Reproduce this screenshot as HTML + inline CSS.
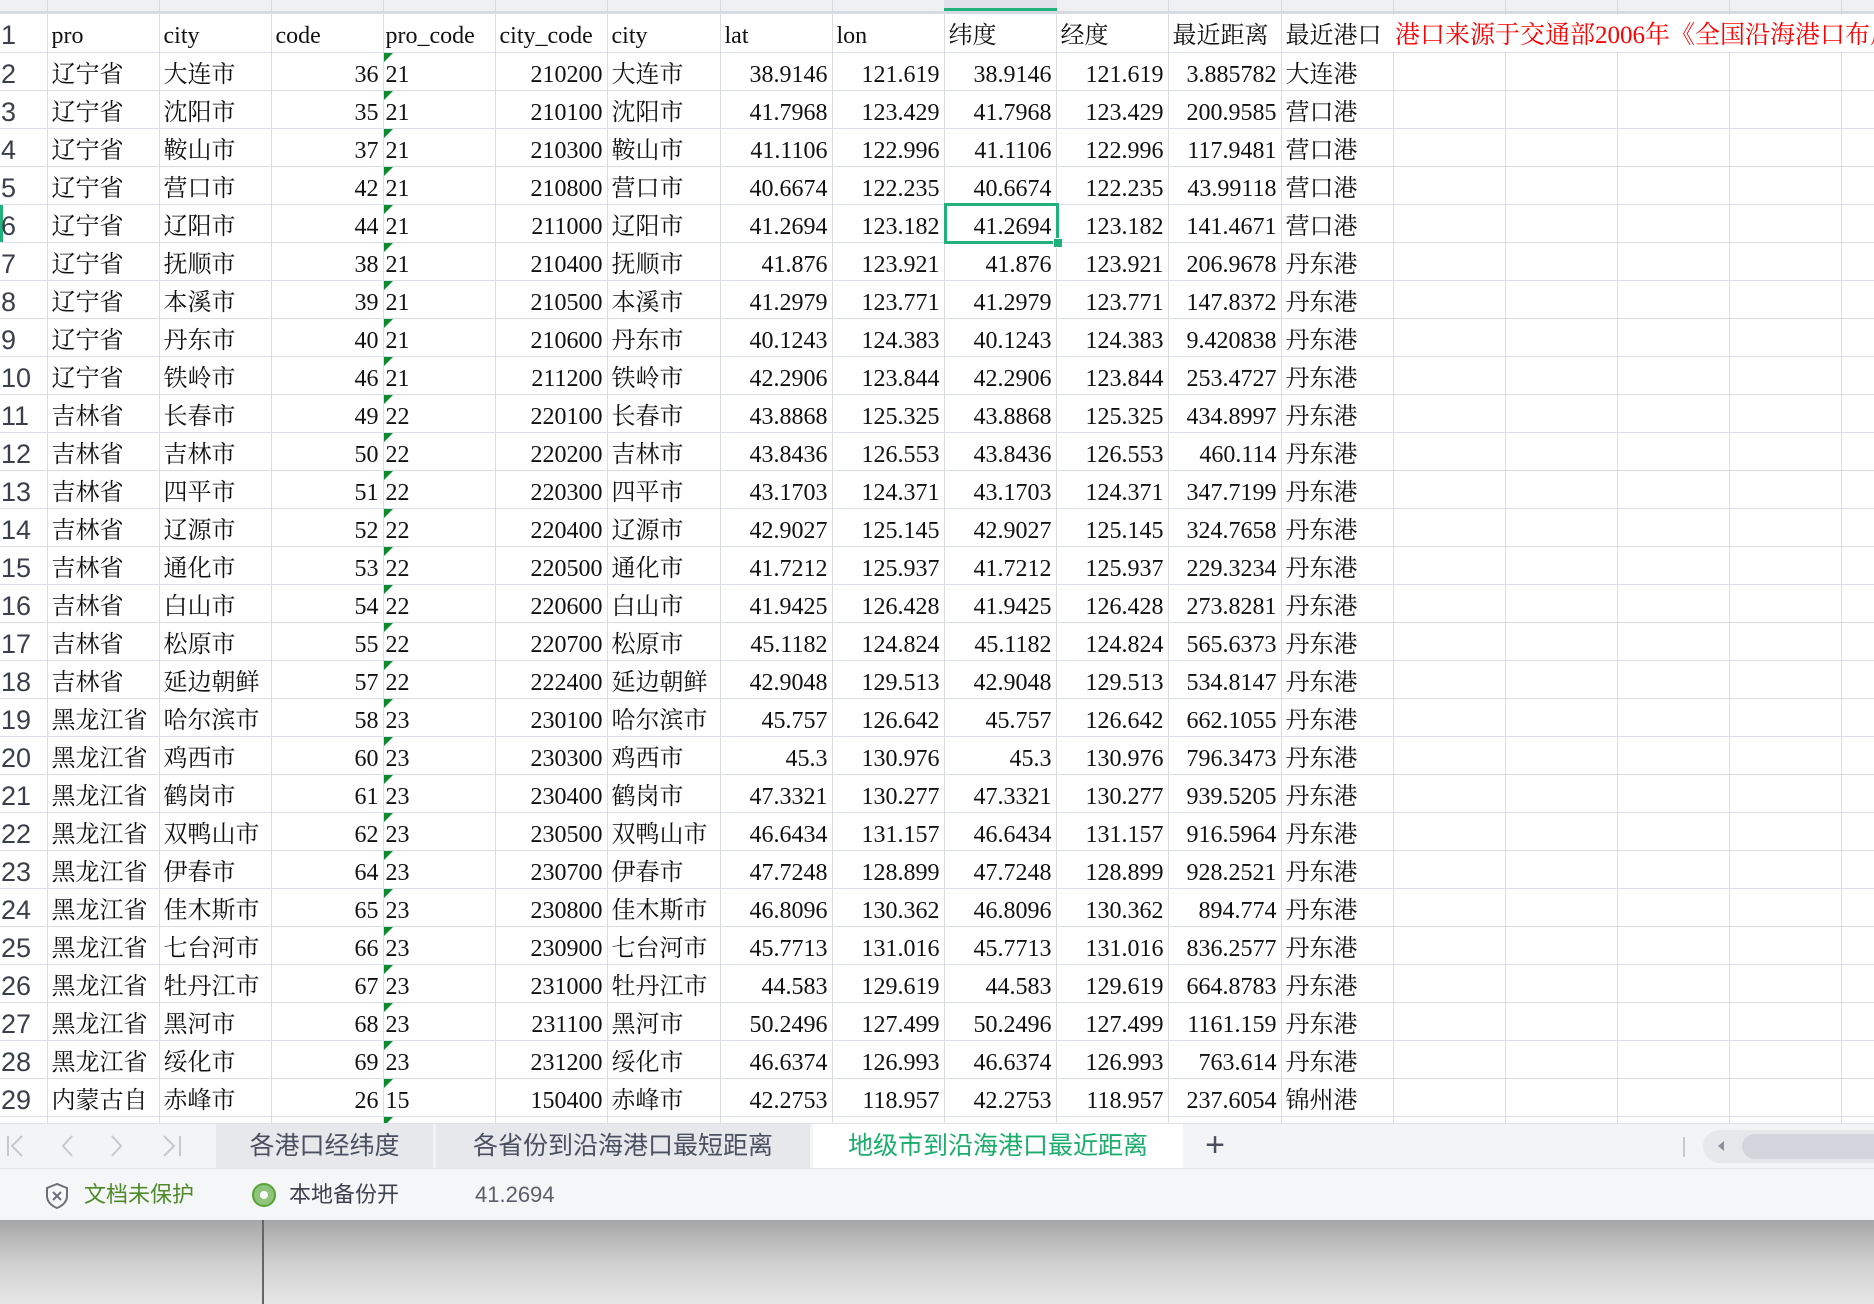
<!DOCTYPE html>
<html><head><meta charset="utf-8"><style>
*{margin:0;padding:0;box-sizing:border-box}
body{width:1874px;height:1304px;overflow:hidden;background:#fff;position:relative;font-family:"Liberation Serif","Noto Serif CJK SC",serif}
#colhdr{position:absolute;left:0;top:0;width:1874px;height:13px;background:#eef0f3;border-bottom:2px solid #d5d9e0}
#colhdr i{position:absolute;top:0;height:13px;width:1px;background:#d5d9e0}
table{position:absolute;left:0;top:13px;border-collapse:collapse;table-layout:fixed;width:1909px}
td,th{height:38px;border:1px solid #d9dee6;font-size:24px;line-height:30px;font-weight:normal;white-space:nowrap;overflow:hidden;padding:7px 4px 0;color:#111;vertical-align:top}
tr:first-child td,tr:first-child th{height:39px}
th{font-family:"Liberation Sans","Noto Sans CJK SC",sans-serif;text-align:left;color:#3a3f4a;font-size:27px;padding:6px 0 0 1px;background:#fff;border-left:none}
td:nth-child(4),td:nth-child(6),td:nth-child(8),td:nth-child(9),td:nth-child(10),td:nth-child(11),td:nth-child(12){text-align:right}
tr:not(:first-child) td:nth-child(5){position:relative}
tr:not(:first-child) td:nth-child(5)::before{content:"";position:absolute;left:0;top:0;border-top:9px solid #0a8a2a;border-right:9px solid transparent}
td:nth-child(5){padding-left:2px}
#sel{position:absolute;left:944px;top:203px;width:115px;height:41px;border:3px solid #20b27a}
#sel b{position:absolute;right:-7px;bottom:-7px;width:10px;height:10px;background:#20b27a;border:1px solid #fff}
#red{position:absolute;left:1392px;top:15px;width:482px;height:36px;background:#fff;color:#f00;font-size:25px;line-height:42px;padding-left:3px;white-space:nowrap;overflow:hidden}
#tabs{position:absolute;left:0;top:1123px;width:1874px;height:45px;background:#f3f4f6;font-family:"Liberation Sans","Noto Sans CJK SC",sans-serif;border-top:1px solid #dde0e5}
.tab{position:absolute;top:0;height:45px;line-height:45px;text-align:center;font-size:25px;color:#4a5060;background:#e6e8ec}
#status{position:absolute;left:0;top:1168px;width:1874px;height:52px;background:#f5f6f8;border-top:1px solid #e3e5e9;font-family:"Liberation Sans","Noto Sans CJK SC",sans-serif;font-size:22px;line-height:52px}
#bottom{position:absolute;left:0;top:1220px;width:1874px;height:84px;background:linear-gradient(#a6a6a6,#cfcfcf 50%,#e6e6e6)}
</style></head><body>
<div id="colhdr"><i style="left:47px"></i><i style="left:159px"></i><i style="left:271px"></i><i style="left:383px"></i><i style="left:495px"></i><i style="left:607px"></i><i style="left:720px"></i><i style="left:832px"></i><i style="left:944px"></i><i style="left:1056px"></i><i style="left:1168px"></i><i style="left:1281px"></i><i style="left:1393px"></i><i style="left:1505px"></i><i style="left:1617px"></i><i style="left:1729px"></i><i style="left:1841px"></i><div style="position:absolute;left:944px;top:0;width:113px;height:11px;background:#dfe2e8;border-bottom:3px solid #20b27a"></div></div>
<table>
<colgroup><col style="width:47px"><col style="width:112px"><col style="width:112px"><col style="width:112px"><col style="width:112px"><col style="width:112px"><col style="width:113px"><col style="width:112px"><col style="width:112px"><col style="width:112px"><col style="width:112px"><col style="width:113px"><col style="width:112px"><col style="width:112px"><col style="width:112px"><col style="width:112px"><col style="width:112px"><col style="width:68px"></colgroup>
<tr><th>1</th><td>pro</td><td>city</td><td style="text-align:left">code</td><td>pro_code</td><td style="text-align:left">city_code</td><td>city</td><td style="text-align:left">lat</td><td style="text-align:left">lon</td><td style="text-align:left">纬度</td><td style="text-align:left">经度</td><td style="text-align:left">最近距离</td><td>最近港口</td><td></td><td></td><td></td><td></td><td></td></tr>
<tr><th>2</th><td>辽宁省</td><td>大连市</td><td>36</td><td>21</td><td>210200</td><td>大连市</td><td>38.9146</td><td>121.619</td><td>38.9146</td><td>121.619</td><td>3.885782</td><td>大连港</td><td></td><td></td><td></td><td></td><td></td></tr>
<tr><th>3</th><td>辽宁省</td><td>沈阳市</td><td>35</td><td>21</td><td>210100</td><td>沈阳市</td><td>41.7968</td><td>123.429</td><td>41.7968</td><td>123.429</td><td>200.9585</td><td>营口港</td><td></td><td></td><td></td><td></td><td></td></tr>
<tr><th>4</th><td>辽宁省</td><td>鞍山市</td><td>37</td><td>21</td><td>210300</td><td>鞍山市</td><td>41.1106</td><td>122.996</td><td>41.1106</td><td>122.996</td><td>117.9481</td><td>营口港</td><td></td><td></td><td></td><td></td><td></td></tr>
<tr><th>5</th><td>辽宁省</td><td>营口市</td><td>42</td><td>21</td><td>210800</td><td>营口市</td><td>40.6674</td><td>122.235</td><td>40.6674</td><td>122.235</td><td>43.99118</td><td>营口港</td><td></td><td></td><td></td><td></td><td></td></tr>
<tr><th style="box-shadow:inset 3px 0 0 #20b27a">6</th><td>辽宁省</td><td>辽阳市</td><td>44</td><td>21</td><td>211000</td><td>辽阳市</td><td>41.2694</td><td>123.182</td><td>41.2694</td><td>123.182</td><td>141.4671</td><td>营口港</td><td></td><td></td><td></td><td></td><td></td></tr>
<tr><th>7</th><td>辽宁省</td><td>抚顺市</td><td>38</td><td>21</td><td>210400</td><td>抚顺市</td><td>41.876</td><td>123.921</td><td>41.876</td><td>123.921</td><td>206.9678</td><td>丹东港</td><td></td><td></td><td></td><td></td><td></td></tr>
<tr><th>8</th><td>辽宁省</td><td>本溪市</td><td>39</td><td>21</td><td>210500</td><td>本溪市</td><td>41.2979</td><td>123.771</td><td>41.2979</td><td>123.771</td><td>147.8372</td><td>丹东港</td><td></td><td></td><td></td><td></td><td></td></tr>
<tr><th>9</th><td>辽宁省</td><td>丹东市</td><td>40</td><td>21</td><td>210600</td><td>丹东市</td><td>40.1243</td><td>124.383</td><td>40.1243</td><td>124.383</td><td>9.420838</td><td>丹东港</td><td></td><td></td><td></td><td></td><td></td></tr>
<tr><th>10</th><td>辽宁省</td><td>铁岭市</td><td>46</td><td>21</td><td>211200</td><td>铁岭市</td><td>42.2906</td><td>123.844</td><td>42.2906</td><td>123.844</td><td>253.4727</td><td>丹东港</td><td></td><td></td><td></td><td></td><td></td></tr>
<tr><th>11</th><td>吉林省</td><td>长春市</td><td>49</td><td>22</td><td>220100</td><td>长春市</td><td>43.8868</td><td>125.325</td><td>43.8868</td><td>125.325</td><td>434.8997</td><td>丹东港</td><td></td><td></td><td></td><td></td><td></td></tr>
<tr><th>12</th><td>吉林省</td><td>吉林市</td><td>50</td><td>22</td><td>220200</td><td>吉林市</td><td>43.8436</td><td>126.553</td><td>43.8436</td><td>126.553</td><td>460.114</td><td>丹东港</td><td></td><td></td><td></td><td></td><td></td></tr>
<tr><th>13</th><td>吉林省</td><td>四平市</td><td>51</td><td>22</td><td>220300</td><td>四平市</td><td>43.1703</td><td>124.371</td><td>43.1703</td><td>124.371</td><td>347.7199</td><td>丹东港</td><td></td><td></td><td></td><td></td><td></td></tr>
<tr><th>14</th><td>吉林省</td><td>辽源市</td><td>52</td><td>22</td><td>220400</td><td>辽源市</td><td>42.9027</td><td>125.145</td><td>42.9027</td><td>125.145</td><td>324.7658</td><td>丹东港</td><td></td><td></td><td></td><td></td><td></td></tr>
<tr><th>15</th><td>吉林省</td><td>通化市</td><td>53</td><td>22</td><td>220500</td><td>通化市</td><td>41.7212</td><td>125.937</td><td>41.7212</td><td>125.937</td><td>229.3234</td><td>丹东港</td><td></td><td></td><td></td><td></td><td></td></tr>
<tr><th>16</th><td>吉林省</td><td>白山市</td><td>54</td><td>22</td><td>220600</td><td>白山市</td><td>41.9425</td><td>126.428</td><td>41.9425</td><td>126.428</td><td>273.8281</td><td>丹东港</td><td></td><td></td><td></td><td></td><td></td></tr>
<tr><th>17</th><td>吉林省</td><td>松原市</td><td>55</td><td>22</td><td>220700</td><td>松原市</td><td>45.1182</td><td>124.824</td><td>45.1182</td><td>124.824</td><td>565.6373</td><td>丹东港</td><td></td><td></td><td></td><td></td><td></td></tr>
<tr><th>18</th><td>吉林省</td><td>延边朝鲜</td><td>57</td><td>22</td><td>222400</td><td>延边朝鲜</td><td>42.9048</td><td>129.513</td><td>42.9048</td><td>129.513</td><td>534.8147</td><td>丹东港</td><td></td><td></td><td></td><td></td><td></td></tr>
<tr><th>19</th><td>黑龙江省</td><td>哈尔滨市</td><td>58</td><td>23</td><td>230100</td><td>哈尔滨市</td><td>45.757</td><td>126.642</td><td>45.757</td><td>126.642</td><td>662.1055</td><td>丹东港</td><td></td><td></td><td></td><td></td><td></td></tr>
<tr><th>20</th><td>黑龙江省</td><td>鸡西市</td><td>60</td><td>23</td><td>230300</td><td>鸡西市</td><td>45.3</td><td>130.976</td><td>45.3</td><td>130.976</td><td>796.3473</td><td>丹东港</td><td></td><td></td><td></td><td></td><td></td></tr>
<tr><th>21</th><td>黑龙江省</td><td>鹤岗市</td><td>61</td><td>23</td><td>230400</td><td>鹤岗市</td><td>47.3321</td><td>130.277</td><td>47.3321</td><td>130.277</td><td>939.5205</td><td>丹东港</td><td></td><td></td><td></td><td></td><td></td></tr>
<tr><th>22</th><td>黑龙江省</td><td>双鸭山市</td><td>62</td><td>23</td><td>230500</td><td>双鸭山市</td><td>46.6434</td><td>131.157</td><td>46.6434</td><td>131.157</td><td>916.5964</td><td>丹东港</td><td></td><td></td><td></td><td></td><td></td></tr>
<tr><th>23</th><td>黑龙江省</td><td>伊春市</td><td>64</td><td>23</td><td>230700</td><td>伊春市</td><td>47.7248</td><td>128.899</td><td>47.7248</td><td>128.899</td><td>928.2521</td><td>丹东港</td><td></td><td></td><td></td><td></td><td></td></tr>
<tr><th>24</th><td>黑龙江省</td><td>佳木斯市</td><td>65</td><td>23</td><td>230800</td><td>佳木斯市</td><td>46.8096</td><td>130.362</td><td>46.8096</td><td>130.362</td><td>894.774</td><td>丹东港</td><td></td><td></td><td></td><td></td><td></td></tr>
<tr><th>25</th><td>黑龙江省</td><td>七台河市</td><td>66</td><td>23</td><td>230900</td><td>七台河市</td><td>45.7713</td><td>131.016</td><td>45.7713</td><td>131.016</td><td>836.2577</td><td>丹东港</td><td></td><td></td><td></td><td></td><td></td></tr>
<tr><th>26</th><td>黑龙江省</td><td>牡丹江市</td><td>67</td><td>23</td><td>231000</td><td>牡丹江市</td><td>44.583</td><td>129.619</td><td>44.583</td><td>129.619</td><td>664.8783</td><td>丹东港</td><td></td><td></td><td></td><td></td><td></td></tr>
<tr><th>27</th><td>黑龙江省</td><td>黑河市</td><td>68</td><td>23</td><td>231100</td><td>黑河市</td><td>50.2496</td><td>127.499</td><td>50.2496</td><td>127.499</td><td>1161.159</td><td>丹东港</td><td></td><td></td><td></td><td></td><td></td></tr>
<tr><th>28</th><td>黑龙江省</td><td>绥化市</td><td>69</td><td>23</td><td>231200</td><td>绥化市</td><td>46.6374</td><td>126.993</td><td>46.6374</td><td>126.993</td><td>763.614</td><td>丹东港</td><td></td><td></td><td></td><td></td><td></td></tr>
<tr><th>29</th><td>内蒙古自</td><td>赤峰市</td><td>26</td><td>15</td><td>150400</td><td>赤峰市</td><td>42.2753</td><td>118.957</td><td>42.2753</td><td>118.957</td><td>237.6054</td><td>锦州港</td><td></td><td></td><td></td><td></td><td></td></tr>
<tr><th></th><td></td><td></td><td></td><td></td><td></td><td></td><td></td><td></td><td></td><td></td><td></td><td></td><td></td><td></td><td></td><td></td><td></td></tr>
</table>
<div id="red">港口来源于交通部2006年《全国沿海港口布局规划》</div>
<div id="sel"><b></b></div>
<div id="tabs">
<svg style="position:absolute;left:0;top:0" width="210" height="45" fill="none" stroke="#c4c8cf" stroke-width="2"><path d="M8 12v20M22 12l-10 10 10 10"/><path d="M72 12l-9 10 9 10"/><path d="M112 12l9 10-9 10"/><path d="M164 12l10 10-10 10M180 12v20"/></svg>
<div class="tab" style="left:216px;width:217px">各港口经纬度</div>
<div class="tab" style="left:436px;width:374px">各省份到沿海港口最短距离</div>
<div class="tab" style="left:813px;width:370px;background:#fff;color:#1aad6b">地级市到沿海港口最近距离</div>
<div style="position:absolute;left:1200px;top:0;font-size:34px;line-height:42px;color:#4a5060;width:30px;text-align:center">+</div>
<div style="position:absolute;left:1683px;top:13px;width:2px;height:20px;border-left:1px solid #c4c8cf;border-right:1px solid #c4c8cf"></div>
<div style="position:absolute;left:1703px;top:6px;width:200px;height:33px;border-radius:17px;background:#e6e8ec"></div>
<div style="position:absolute;left:1718px;top:17px;border-right:6px solid #8a909a;border-top:5px solid transparent;border-bottom:5px solid transparent"></div>
<div style="position:absolute;left:1742px;top:10px;width:150px;height:25px;border-radius:13px;background:#d2d5db"></div>
</div>
<div id="status">
<svg style="position:absolute;left:44px;top:13px" width="26" height="28" fill="none" stroke="#6b6f78" stroke-width="2"><path d="M13 2L3 6v8c0 6 5 10 10 12 5-2 10-6 10-12V6z"/><path d="M9 10l8 8M17 10l-8 8"/></svg>
<span style="position:absolute;left:84px;color:#4f8a2a">文档未保护</span>
<div style="position:absolute;left:252px;top:14px;width:24px;height:24px;border-radius:50%;background:#8fc47a;border:2px solid #57a33a"><div style="position:absolute;left:6px;top:6px;width:8px;height:8px;border-radius:50%;background:#fff"></div></div>
<span style="position:absolute;left:289px;color:#3d4250">本地备份开</span>
<span style="position:absolute;left:475px;color:#5a5f6a">41.2694</span>
</div>
<div id="bottom"><div style="position:absolute;left:262px;top:0;width:2px;height:84px;background:#666"></div></div>
</body></html>
